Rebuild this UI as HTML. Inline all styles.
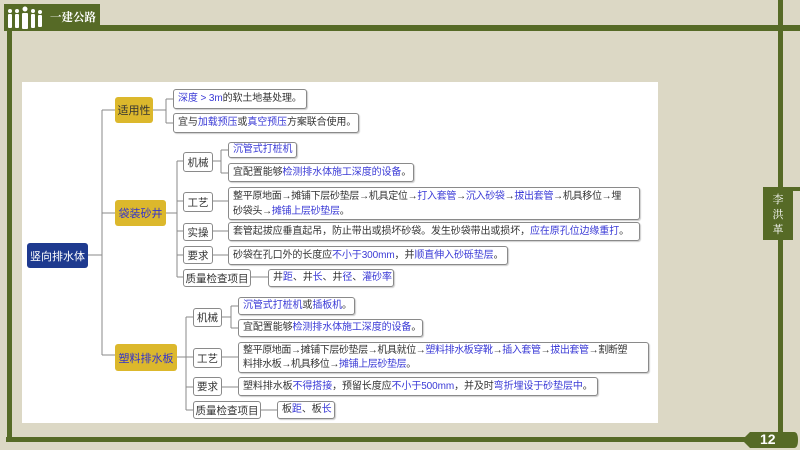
<!DOCTYPE html>
<html><head><meta charset="utf-8"><style>
*{margin:0;padding:0;box-sizing:border-box}
body{width:800px;height:450px;background:#dcd8c5;position:relative;overflow:hidden;font-family:"Liberation Sans","Noto Sans CJK SC",sans-serif}
.g{position:absolute;background:#566a26}
.panel{position:absolute;left:22px;top:82px;width:636px;height:341px;background:#fff}
.b{position:absolute;border:1px solid #8a8a8a;border-radius:3px;background:#fff;font-size:10px;letter-spacing:-0.1px;color:#333;line-height:17px;padding:0 4px;white-space:nowrap;overflow:hidden;box-shadow:1px 1px 1px #ccc}
.y{position:absolute;background:#dcb82c;border-radius:3px;color:#3333cc;font-size:11px;display:flex;align-items:center;justify-content:center}
.c{position:absolute;border:1px solid #8a8a8a;border-radius:3px;background:#fff;font-size:10.5px;color:#333;display:flex;align-items:center;justify-content:center}
i{font-style:normal;color:#3a3ad6}
</style></head><body>
<div class="g" style="left:4px;top:4px;width:96px;height:27px"></div>
<svg style="position:absolute;left:6px;top:6px" width="40" height="24" viewBox="0 0 40 24" fill="#fff">
<circle cx="4" cy="5" r="2"/><rect x="2" y="8" width="4" height="14" rx="1"/>
<circle cx="11" cy="5" r="2"/><rect x="9" y="8" width="4" height="14" rx="1"/>
<circle cx="19" cy="3" r="2.5"/><rect x="16" y="7" width="6" height="16" rx="1"/>
<circle cx="27" cy="5" r="2"/><rect x="25" y="8" width="4" height="14" rx="1"/>
<circle cx="34" cy="6" r="2"/><rect x="32" y="9" width="4" height="12" rx="1"/>
</svg>
<div style="position:absolute;left:50px;top:9px;color:#fff;font-weight:bold;font-size:11.5px;font-family:'Noto Serif CJK SC',serif">一建公路</div>
<div class="g" style="left:100px;top:25px;width:700px;height:6px"></div>
<div class="g" style="left:7px;top:30px;width:5px;height:412px"></div>
<div class="g" style="left:778px;top:0;width:5px;height:441px"></div>
<div class="g" style="left:6px;top:437px;width:740px;height:5px"></div>
<div class="g" style="left:763px;top:187px;width:37px;height:4px"></div>
<div class="g" style="left:763px;top:188px;width:30px;height:52px"></div>
<div style="position:absolute;left:763px;top:192px;width:30px;color:#fff;font-size:11px;line-height:15px;text-align:center;font-family:'Noto Serif CJK SC',serif">李<br>洪<br>革</div>
<svg style="position:absolute;left:740px;top:431px" width="60" height="18"><path d="M2 9 L10 1 H54 Q58 1 58 9 Q58 17 54 17 H10 Z" fill="#566a26"/></svg>
<div style="position:absolute;left:760px;top:431px;color:#fff;font-weight:bold;font-size:14px">12</div>
<div class="panel"></div>
<svg style="position:absolute;left:0;top:0" width="800" height="450" fill="none" stroke="#8a8a8a" stroke-width="1">
<path d="M88 255H102M102 110V355M102 110H115M102 213H115M102 355H116"/>
<path d="M153 110H166M166 99V123M166 99H173M166 123H173"/>
<path d="M166 213H177M177 161V277M177 161H183M177 201H183M177 231H183M177 255H183M177 277H183"/>
<path d="M213 161H221M221 150V173M221 150H228M221 173H228M213 201H228M213 231H228M213 255H228M251 277H268"/>
<path d="M177 357H186M186 317V410M186 317H193M186 357H193M186 387H193M186 410H193"/>
<path d="M222 317H231M231 306V328M231 306H238M231 328H238M222 357H238M222 387H238M261 410H277"/>
</svg>
<div class="y" style="left:27px;top:243px;width:61px;height:25px;background:#1e3a8f;color:#fff">竖向排水体</div>
<div class="y" style="left:115px;top:97px;width:38px;height:26px;color:#333">适用性</div>
<div class="y" style="left:115px;top:200px;width:51px;height:26px">袋装砂井</div>
<div class="y" style="left:115px;top:344px;width:62px;height:27px">塑料排水板</div>
<div class="b" style="left:173px;top:89px;width:134px;height:20px;line-height:18px"><i>深度 &gt; 3m</i>的软土地基处理。</div>
<div class="b" style="left:173px;top:113px;width:186px;height:20px;line-height:18px">宜与<i>加载预压</i>或<i>真空预压</i>方案联合使用。</div>
<div class="c" style="left:183px;top:152px;width:30px;height:20px">机械</div>
<div class="b" style="left:228px;top:142px;width:69px;height:16px;line-height:14px"><i>沉管式打桩机</i></div>
<div class="b" style="left:228px;top:163px;width:186px;height:19px">宜配置能够<i>检测排水体施工深度的设备</i>。</div>
<div class="c" style="left:183px;top:192px;width:30px;height:20px">工艺</div>
<div class="b" style="left:228px;top:187px;width:412px;height:33px;line-height:15px;padding-top:1px;letter-spacing:-0.3px">整平原地面→摊铺下层砂垫层→机具定位→<i>打入套管</i>→<i>沉入砂袋</i>→<i>拔出套管</i>→机具移位→埋<br>砂袋头→<i>摊铺上层砂垫层</i>。</div>
<div class="c" style="left:183px;top:223px;width:30px;height:18px">实操</div>
<div class="b" style="left:228px;top:222px;width:412px;height:19px">套管起拔应垂直起吊，防止带出或损坏砂袋。发生砂袋带出或损坏，<i>应在原孔位边缘重打</i>。</div>
<div class="c" style="left:183px;top:246px;width:30px;height:18px">要求</div>
<div class="b" style="left:228px;top:246px;width:280px;height:19px">砂袋在孔口外的长度应<i>不小于300mm</i>，并<i>顺直伸入砂砾垫层</i>。</div>
<div class="c" style="left:183px;top:269px;width:68px;height:18px">质量检查项目</div>
<div class="b" style="left:268px;top:269px;width:126px;height:18px;line-height:16px">井<i>距</i>、井<i>长</i>、井<i>径</i>、<i>灌砂率</i></div>
<div class="c" style="left:193px;top:308px;width:29px;height:19px">机械</div>
<div class="b" style="left:238px;top:297px;width:117px;height:18px;line-height:16px"><i>沉管式打桩机</i>或<i>插板机</i>。</div>
<div class="b" style="left:238px;top:319px;width:185px;height:18px;line-height:16px">宜配置能够<i>检测排水体施工深度的设备</i>。</div>
<div class="c" style="left:193px;top:348px;width:29px;height:20px">工艺</div>
<div class="b" style="left:238px;top:342px;width:411px;height:31px;line-height:14px;padding-top:1px;letter-spacing:-0.4px">整平原地面→摊铺下层砂垫层→机具就位→<i>塑料排水板穿靴</i>→<i>插入套管</i>→<i>拔出套管</i>→割断塑<br>料排水板→机具移位→<i>摊铺上层砂垫层</i>。</div>
<div class="c" style="left:193px;top:377px;width:29px;height:19px">要求</div>
<div class="b" style="left:238px;top:377px;width:360px;height:19px">塑料排水板<i>不得搭接</i>，预留长度应<i>不小于500mm</i>，并及时<i>弯折埋设于砂垫层中</i>。</div>
<div class="c" style="left:193px;top:401px;width:68px;height:18px">质量检查项目</div>
<div class="b" style="left:277px;top:401px;width:58px;height:18px;line-height:16px">板<i>距</i>、板<i>长</i></div>
</body></html>
